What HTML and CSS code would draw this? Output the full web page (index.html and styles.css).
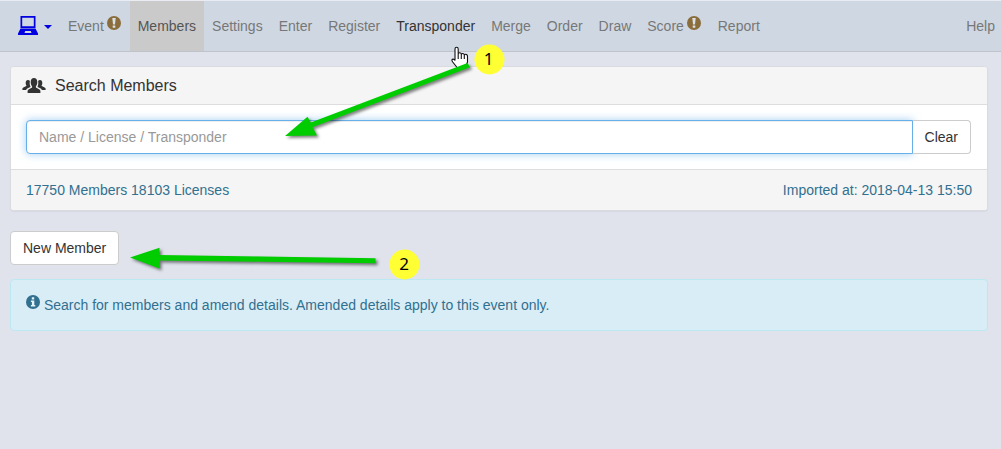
FILE: index.html
```html
<!DOCTYPE html>
<html lang="en">
<head>
<meta charset="utf-8">
<title>Members</title>
<link rel="stylesheet" href="styles.css">
</head>
<body>
<nav class="navbar">
  <a class="brand">
    <svg class="laptop" width="20" height="19" viewBox="0 0 20 19"><path fill-rule="evenodd" d="M2.500 0h15v12h-15zM4.200 1.700v8.600h11.600V1.700zM2.500 12.500h15l2.500 4.900V19H0v-1.600zM7.200 15l-.7 2h7l-.7-2z"/></svg>
    <span class="caret"></span>
  </a>
  <a class="item">Event <svg class="warn" width="14" height="14" viewBox="0 0 14 14"><circle cx="7" cy="7" r="7"/><path d="M5.300 1.900h3.400L8 8.400H6zM5.700 9.400h2.600v2.400H5.700z"/></svg></a>
  <a class="item active">Members</a>
  <a class="item">Settings</a>
  <a class="item">Enter</a>
  <a class="item">Register</a>
  <a class="item hover">Transponder</a>
  <a class="item">Merge</a>
  <a class="item">Order</a>
  <a class="item">Draw</a>
  <a class="item">Score <svg class="warn" width="14" height="14" viewBox="0 0 14 14"><circle cx="7" cy="7" r="7"/><path d="M5.300 1.900h3.400L8 8.400H6zM5.700 9.400h2.600v2.400H5.700z"/></svg></a>
  <a class="item">Report</a>
  <a class="item help">Help</a>
</nav>
<main>
  <section class="panel">
    <header class="panel-heading">
      <svg class="group" width="24" height="16" viewBox="0 0 24 16"><path d="M8.700 4C8.700 1.300 10 0 12 0s3.300 1.300 3.300 4c0 2-.6 3.400-1.400 4.200v1.300l3.600 1.900c.6.400.9.900.9 1.600v2H5.600v-2c0-.7.300-1.200.9-1.600l3.600-1.900V8.200C9.300 7.400 8.700 6 8.700 4z"/><path id="side" d="M3.700 5C3.700 2.900 4.500 2 6 2c.8 0 1.500.3 1.900.9-.4 2-.2 4 .5 5.300v.8L4.900 10.800 4.100 12H.4v-1.300c0-.5.2-.8.600-1l3.600-1.900C4 7.100 3.700 6.300 3.700 5z"/><use href="#side" transform="matrix(-1 0 0 1 24 0)"/></svg>
      <span>Search Members</span>
    </header>
    <div class="panel-body">
      <input class="search" type="text" placeholder="Name / License / Transponder">
      <button class="btn clear">Clear</button>
    </div>
    <footer class="panel-footer"><span>17750 Members 18103 Licenses</span><span>Imported at: 2018-04-13 15:50</span></footer>
  </section>
  <button class="btn">New Member</button>
  <div class="alert"><svg class="info" width="14" height="14" viewBox="0 0 14 14"><circle cx="7" cy="7" r="7"/><path d="M5.800 2.200h2.400v2.200H5.800zM4.900 5.400h3.400v4.700h1v1.500H4.900v-1.500h1V6.900h-1z"/></svg> Search for members and amend details. Amended details apply to this event only.</div>
</main>
<svg class="annotations" width="1001" height="449" viewBox="0 0 1001 449">
  <path class="hand" d="M455 59V49q0-1.700 1.600-1.700t1.600 1.700V53.500q.4-.7 1.500-.7 1.400 0 1.600 1.300.5-.6 1.400-.6 1.300 0 1.600 1.300.5-.5 1.300-.5 1.900 0 1.900 2.200V62l-2 6h-8l-4.800-6q-1.700-2.500.2-2.900 1.300-.2 2.100 1.400zM458.200 53v6M461.300 54v5M464.300 55v4"/>
  <g class="arrows">
    <path d="M285 136l22.500-19.200 3.300 5.800L467.500 63l2.500 4.300-157.500 60 4.500 8.200z"/>
    <path d="M130 257.500l29.500-9.700v7.200l216 3.200v5.100L159.500 260.500v8z"/>
  </g>
  <circle class="marker" cx="489.500" cy="59.500" r="15"/>
  <circle class="marker" cx="404.500" cy="264.500" r="15"/>
  <text class="number" x="488.500" y="65">1</text>
  <text class="number" x="404" y="270">2</text>
</svg>
</body>
</html>
```
FILE: styles.css
```css
* { box-sizing: border-box; }
body {
  margin: 0;
  height: 449px;
  overflow: hidden;
  background: #e0e3ec;
  color: #333;
  font: 14px/20px "Liberation Sans", Arial, sans-serif;
}
.navbar {
  display: flex;
  height: 52px;
  padding-right: 1px;
  background: #cfd7e3;
  border-top: 1px solid #e9edf3;
  border-bottom: 1px solid #bfc4cb;
}
.item { padding: 15px 8px; color: #777; white-space: nowrap; }
.item.active { background: #cacaca; color: #555; }
.item.hover { color: #333; }
.help { margin-left: auto; padding-right: 5px; }
.brand { display: flex; width: 60px; padding: 15px 0 0 18px; }
.laptop { fill: #0000e2; }
.caret {
  margin: 9px 0 0 6px;
  width: 8px;
  height: 4px;
  background: #0000e2;
  clip-path: polygon(0 0, 100% 0, 50% 100%);
}
.warn { margin: -4px 0 0 -1px; vertical-align: 1px; fill: #8a6d3b; }
.warn + * { margin: 0; }
.item:has(.warn) { padding-right: 9px; }
.warn path { fill: #dbe0e6; }
main { padding: 14px 13px 0 10px; }
.panel {
  height: 145px;
  margin-bottom: 20px;
  background: #fff;
  border: 1px solid #d9dbe0;
  border-radius: 4px;
  box-shadow: 0 1px 1px rgba(0, 0, 0, .05);
}
.panel-heading {
  display: flex;
  align-items: center;
  gap: 9px;
  height: 38px;
  padding-left: 11px;
  background: #f5f5f5;
  border-bottom: 1px solid #ddd;
  border-radius: 3px 3px 0 0;
  font-size: 16px;
}
.group { fill: #333; }
.panel-body { display: flex; height: 64px; padding: 15px 16px 15px 15px; }
.search {
  flex: 1;
  height: 34px;
  padding: 6px 12px;
  border: 1px solid #66afe9;
  border-radius: 4px 0 0 4px;
  outline: none;
  background: #fff;
  font: inherit;
  box-shadow: inset 0 1px 1px rgba(0, 0, 0, .075), 0 0 8px rgba(102, 175, 233, .6);
}
.search::placeholder { color: #999; }
.btn {
  display: block;
  height: 34px;
  padding: 6px 12px;
  border: 1px solid #ccc;
  border-radius: 4px;
  background: #fff;
  color: #333;
  font: inherit;
}
.clear { border-left: 0; border-radius: 0 4px 4px 0; }
.panel-footer {
  display: flex;
  justify-content: space-between;
  height: 41px;
  padding: 10px 15px;
  background: #f5f5f5;
  border-top: 1px solid #ddd;
  border-radius: 0 0 3px 3px;
  color: #31708f;
}
.alert {
  height: 52px;
  margin-top: 14px;
  padding: 15px;
  border: 1px solid #bce8f1;
  border-radius: 4px;
  background: #d9edf7;
  color: #31708f;
}
.info { vertical-align: 1px; fill: #31708f; }
.info path { fill: #e4f2f9; }
.annotations { position: absolute; left: 0; top: 0; pointer-events: none; }
.hand { fill: #fff; stroke: #111; stroke-width: 1.1; }
.arrows { fill: #0c0; filter: drop-shadow(2px 2px 1.5px rgba(0, 0, 0, .5)); }
.marker { fill: #ff3; }
.number { font: 17px "Noto Sans", sans-serif; text-anchor: middle; fill: #000; }
```
